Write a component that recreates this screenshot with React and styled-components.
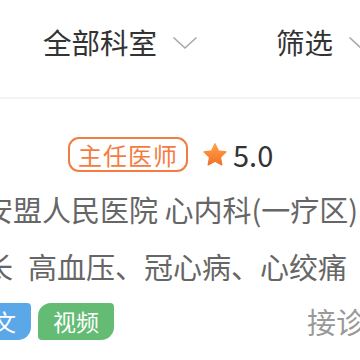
import React from 'react';
import styled, { createGlobalStyle } from 'styled-components';

const GlobalStyle = createGlobalStyle`
	html, body {
		margin: 0;
		padding: 0;
		background: #ffffff;
	}
	body {
		width: 360px;
		height: 360px;
		overflow: hidden;
		font-family: "Noto Sans CJK SC", "Noto Sans", sans-serif;
	}
`;

const Page = styled.div`
	width: 360px;
	height: 360px;
	overflow: hidden;
	background: #ffffff;
`;

const FilterBar = styled.div`
	display: flex;
	align-items: center;
	gap: 78px;
	height: 99px;
	box-sizing: border-box;
	padding: 0 0 12px 43px;
	border-bottom: 2px solid #f3f3f3;
	white-space: nowrap;
`;

const FilterItem = styled.div`
	display: flex;
	align-items: center;
	gap: 15px;
	font-size: 28.5px;
	line-height: 1;
	color: #333333;
`;

const Chevron = () => (
	<svg width="26" height="14" viewBox="0 0 26 14">
		<polyline points="1.5,1.5 13,12 24.5,1.5" fill="none" stroke="#a8a8a8" strokeWidth="1.6" />
	</svg>
);

const Card = styled.div`
	display: flex;
	flex-direction: column;
	gap: 17px;
	width: 510px;
	margin-left: -45px;
	padding-top: 38px;
	white-space: nowrap;
`;

const TitleRow = styled.div`
	display: flex;
	align-items: center;
	height: 35px;
	padding-left: 113px;
`;

const Badge = styled.span`
	display: inline-flex;
	align-items: center;
	justify-content: center;
	box-sizing: border-box;
	height: 35px;
	padding: 0 8px;
	border: 2px solid #f47c40;
	border-radius: 11px;
	color: #f47c40;
	font-size: 24px;
	letter-spacing: 1px;
	line-height: 1;
`;

const Rating = styled.span`
	display: inline-flex;
	align-items: center;
	gap: 5px;
	margin-left: 14px;
	font-size: 29px;
	color: #333333;
	line-height: 1;
`;

const Star = () => (
	<svg width="26" height="26" viewBox="0 0 24 24">
		<defs>
			<linearGradient id="starGrad" x1="0" y1="0" x2="0" y2="1">
				<stop offset="0" stopColor="#ffa245" />
				<stop offset="1" stopColor="#f2702a" />
			</linearGradient>
		</defs>
		<path
			d="M12 1.6l3.1 6.6 7.1.9-5.2 4.9 1.3 7.1L12 17.6l-6.3 3.5 1.3-7.1L1.8 9.1l7.1-.9z"
			fill="url(#starGrad)"
			stroke="url(#starGrad)"
			strokeWidth="1.2"
			strokeLinejoin="round"
		/>
	</svg>
);

const InfoLine = styled.div`
	font-size: 29px;
	line-height: 40px;
	color: ${p => p.$muted ? '#666666' : '#333333'};
`;

const Label = styled.span`
	margin-right: 15px;
`;

const TagRow = styled.div`
	display: flex;
	align-items: center;
	gap: 7px;
	height: 37px;
`;

const Tag = styled.span`
	display: inline-flex;
	align-items: center;
	justify-content: center;
	width: 76px;
	height: 37px;
	border-radius: 13px 4px 13px 4px;
	background: ${p => p.$color};
	color: #ffffff;
	font-size: 23px;
	line-height: 1;
`;

const Consult = styled.span`
	margin-left: auto;
	font-size: 29px;
	color: #999999;
	line-height: 1;
`;

const App = () => {
	return (
		<Page>
			<GlobalStyle />
			<FilterBar>
				<FilterItem>全部科室 <Chevron /></FilterItem>
				<FilterItem>筛选 <Chevron /></FilterItem>
			</FilterBar>
			<Card>
				<TitleRow>
					<Badge>主任医师</Badge>
					<Rating><Star />5.0</Rating>
				</TitleRow>
				<InfoLine $muted>兴安盟人民医院 心内科(一疗区)</InfoLine>
				<InfoLine $muted><Label>擅长</Label>高血压、冠心病、心绞痛</InfoLine>
				<TagRow>
					<Tag $color="#5ba8e8">图文</Tag>
					<Tag $color="#63bb74">视频</Tag>
					<Consult>接诊量 1268</Consult>
				</TagRow>
			</Card>
		</Page>
	);
};

export default App;
